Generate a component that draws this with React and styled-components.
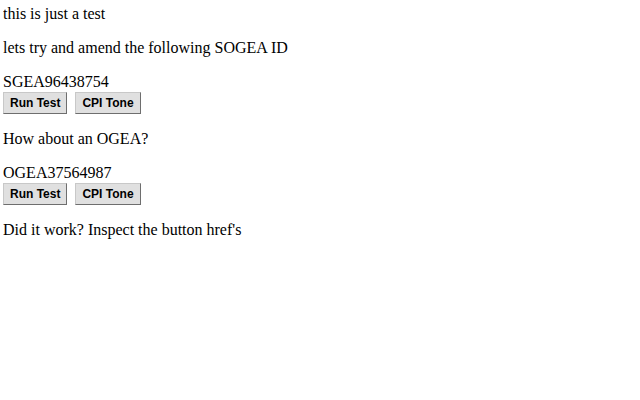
import React from "react";
import styled, { createGlobalStyle } from "styled-components";

const Global = createGlobalStyle`
  body {
    margin: 5px 3px 3px;
    font-family: "Liberation Serif", "Times New Roman", serif;
    font-size: 16px;
    color: #000;
    background: #fff;
  }
`;

const Para = styled.p`
  margin: 0 0 16px;
  line-height: 18px;
`;

const IdBlock = styled.div`
  margin-bottom: 16px;
`;

const IdLine = styled.div`
  line-height: 18px;
`;

const Actions = styled.div`
  display: flex;
  gap: 8px;
  margin-top: 1px;
`;

const ActionButton = styled.a`
  display: inline-flex;
  align-items: center;
  height: 22px;
  box-sizing: border-box;
  padding: 0 6px;
  font-family: "Liberation Sans", Arial, sans-serif;
  font-weight: bold;
  font-size: 12px;
  color: #000;
  text-decoration: none;
  background: #e0e0e0;
  border: 1px solid;
  border-color: #c8c8c8 #6e6e6e #6e6e6e #c8c8c8;
`;

function IdEntry({ id }) {
  return (
    <IdBlock>
      <IdLine>{id}</IdLine>
      <Actions>
        <ActionButton href={`#run-test-${id}`}>Run Test</ActionButton>
        <ActionButton href={`#cpi-tone-${id}`}>CPI Tone</ActionButton>
      </Actions>
    </IdBlock>
  );
}

export default function App() {
  return (
    <>
      <Global />
      <Para>this is just a test</Para>
      <Para>lets try and amend the following SOGEA ID</Para>
      <IdEntry id="SGEA96438754" />
      <Para>How about an OGEA?</Para>
      <IdEntry id="OGEA37564987" />
      <Para>Did it work? Inspect the button href's</Para>
    </>
  );
}
